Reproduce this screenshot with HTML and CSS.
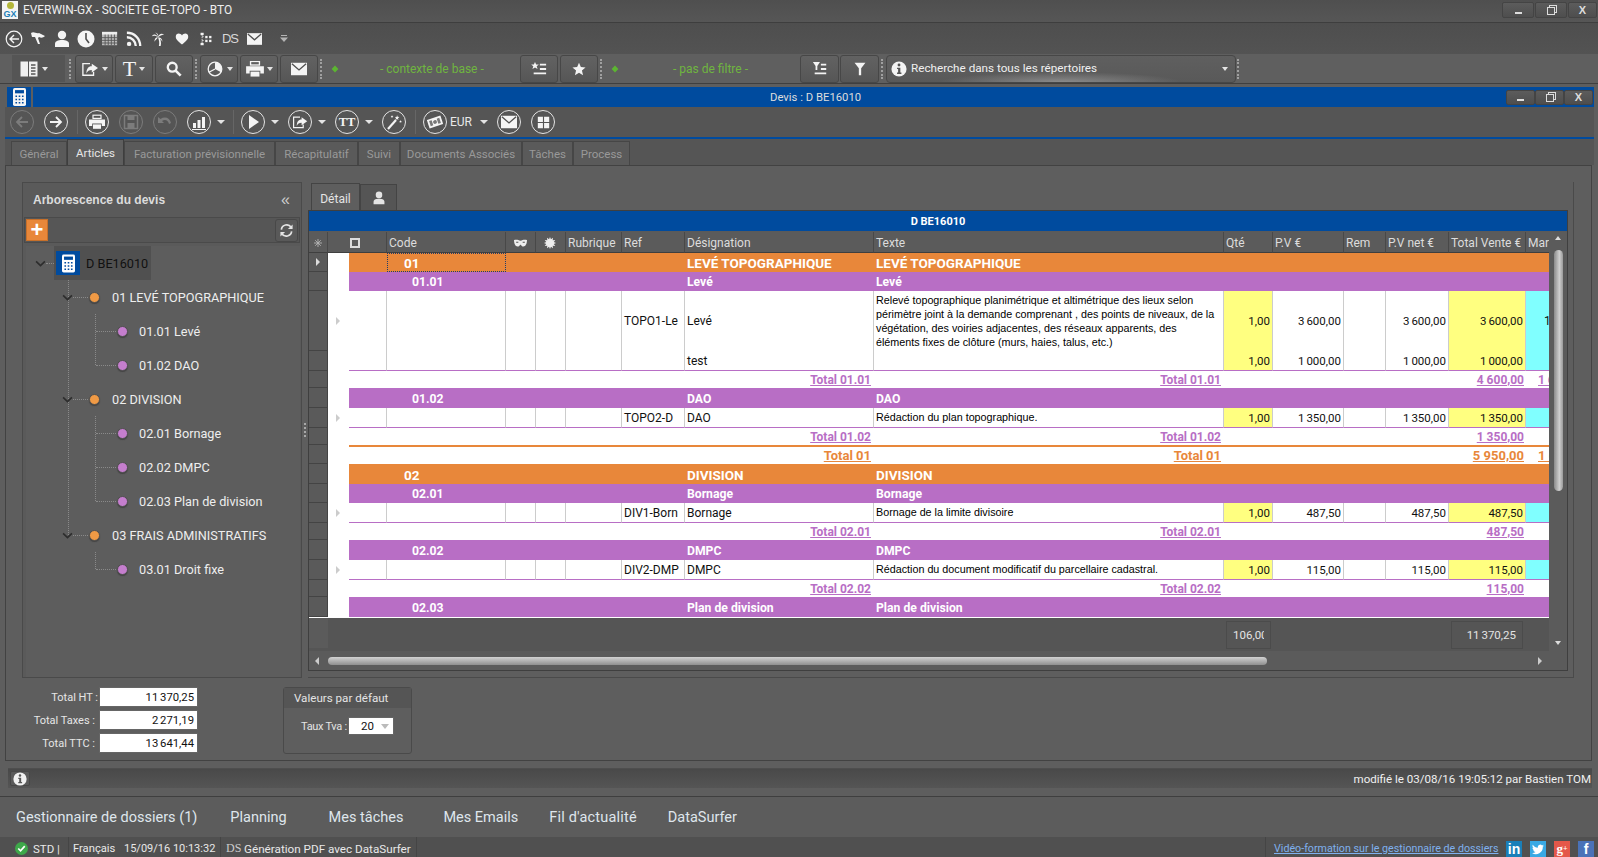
FILE: index.html
```html
<!DOCTYPE html>
<html lang="fr">
<head>
<meta charset="utf-8">
<title>EVERWIN-GX</title>
<link rel="stylesheet" href="styles.css">
</head>
<body>
<svg class="defs" aria-hidden="true">
  <symbol id="i-back" viewBox="0 0 18 18"><circle cx="9" cy="9" r="7.8" fill="none" stroke="currentColor" stroke-width="1.2"/><path d="M14 9H5M9 5L5 9l4 4" fill="none" stroke="currentColor" stroke-width="1.4"/></symbol>
  <symbol id="i-flag" viewBox="0 0 18 18"><path d="M2 3c3-2 5 1 8 0l6 3c-2 2-4 2-6 1l-1 1 2 6-2 0-3-7-3 0z" fill="currentColor"/></symbol>
  <symbol id="i-person" viewBox="0 0 18 18"><circle cx="9" cy="5" r="4.2" fill="currentColor"/><path d="M2 17v-3c0-3 3-4 7-4s7 1 7 4v3z" fill="currentColor"/></symbol>
  <symbol id="i-clock" viewBox="0 0 18 18"><circle cx="9" cy="9" r="8.5" fill="currentColor"/><path d="M9 3v6l3 4" fill="none" stroke="#4d4d4d" stroke-width="1.6"/></symbol>
  <symbol id="i-cal" viewBox="0 0 18 16"><rect width="17" height="15" fill="#bbb"/><rect y="0" width="17" height="3" fill="#eee"/><path d="M0 6.500h17M0 9.500h17M0 12.500h17M3.500 3v12M7 3v12M10.500 3v12M14 3v12" stroke="#555"/></symbol>
  <symbol id="i-rss" viewBox="0 0 18 18"><circle cx="3.500" cy="14.500" r="2.500" fill="currentColor"/><path d="M1 7c5.500 0 10 4.500 10 10M1 2c8.500 0 15 6.500 15 15" fill="none" stroke="currentColor" stroke-width="2.600"/></symbol>
  <symbol id="i-palm" viewBox="0 0 18 18"><path d="M9 7c1 3 2 6 1 10h2c1-4 0-8-2-10zM9 7C7 3 4 3 2 6c2-1 4-1 7 1zM9 7c1-4 4-5 7-3-2 0-4 1-7 3zM9 7C8 9 6 10 5 12c0-3 1-5 4-5zM9 7c3 0 5 2 5 5-1-2-3-4-5-5zM9 7C9 5 8 3 6 2c2 0 4 2 3 5z" fill="currentColor"/></symbol>
  <symbol id="i-heart" viewBox="0 0 18 18"><path d="M9 16C3 11 1 9 1 6c0-5 6-5 8-1.500C11 1 17 1 17 6c0 3-2 5-8 10z" fill="currentColor"/></symbol>
  <symbol id="i-tree" viewBox="0 0 18 18"><path d="M4 3v12M4 6h3M4 11h3" stroke="currentColor" fill="none" stroke-dasharray="2 1"/><rect x="2" y="1" width="4" height="3" fill="currentColor"/><rect x="2" y="14" width="4" height="3" fill="currentColor"/><rect x="8" y="5" width="3" height="3" fill="currentColor"/><rect x="13" y="5" width="3" height="3" fill="currentColor"/><rect x="8" y="10" width="3" height="3" fill="currentColor"/><rect x="13" y="10" width="3" height="3" fill="currentColor"/></symbol>
  <symbol id="i-mail" viewBox="0 0 18 14"><rect width="18" height="14" fill="currentColor"/><path d="M1 1l8 7 8-7" fill="none" stroke="#505050" stroke-width="1.500"/></symbol>
  <symbol id="i-book" viewBox="0 0 18 16"><rect x="0.500" y="0.500" width="7.500" height="15" fill="#f0f0f0"/><rect x="9" y="0.500" width="8.500" height="15" fill="#f0f0f0"/><path d="M11 4h4.500M11 7h4.500M11 10h4.500M11 13h4.500" stroke="#555" stroke-width="1.500"/></symbol>
  <symbol id="i-share" viewBox="0 0 20 18"><path d="M10 3H2v13h12v-4" fill="none" stroke="currentColor" stroke-width="1.500"/><path d="M12 3l7 5-7 5v-3c-3 0-5 1-6 4 0-5 2-8 6-8z" fill="currentColor"/></symbol>
  <symbol id="i-search" viewBox="0 0 18 18"><circle cx="7" cy="7" r="5" fill="none" stroke="currentColor" stroke-width="2.600"/><path d="M10.500 10.500L16.500 16.500" stroke="currentColor" stroke-width="3"/></symbol>
  <symbol id="i-pie" viewBox="0 0 20 20"><circle cx="10" cy="10" r="8.500" fill="none" stroke="currentColor" stroke-width="1.600"/><path d="M10 1.500V10L17.500 14A8.500 8.500 0 0 0 10 1.500z" fill="currentColor"/><path d="M10 10L2.500 14" stroke="currentColor" stroke-width="1.600"/></symbol>
  <symbol id="i-print" viewBox="0 0 20 18"><rect x="5" y="0.500" width="10" height="4" fill="none" stroke="currentColor" stroke-width="1.500"/><path d="M0 6h20v8h-4v-3H4v3H0z" fill="currentColor"/><rect x="5" y="12" width="10" height="5.500" fill="currentColor"/></symbol>
  <symbol id="i-lstar" viewBox="0 0 18 16"><path d="M4.500 0l1.300 3h3l-2.400 2 1 3-2.900-1.800L1.600 8l1-3L.2 3h3z" fill="currentColor"/><path d="M10 3h7M10 8h7M3 13h14" stroke="currentColor" stroke-width="2"/></symbol>
  <symbol id="i-star" viewBox="0 0 18 18"><path d="M9 1l2.400 5.500 6 .5-4.600 4 1.400 6L9 13.800 3.800 17l1.400-6L.6 7l6-.5z" fill="currentColor"/></symbol>
  <symbol id="i-lfilt" viewBox="0 0 18 18"><path d="M1 1h8L6 5.500V10H4V5.500z" fill="currentColor"/><path d="M10 4h6M10 9h6M3 14h13" stroke="currentColor" stroke-width="2"/></symbol>
  <symbol id="i-filter" viewBox="0 0 16 18"><path d="M1 1h14L9.500 8v9h-3V8z" fill="currentColor"/></symbol>
  <symbol id="i-info" viewBox="0 0 18 18"><circle cx="9" cy="9" r="8.500" fill="currentColor"/><circle cx="9" cy="4.500" r="1.600" fill="#555"/><path d="M6.800 7.500H10.500V13h1.200v1.500H6.800V13H8V9H6.800z" fill="#555"/></symbol>
  <symbol id="i-calc" viewBox="0 0 16 22"><rect width="16" height="22" rx="2" fill="currentColor"/><rect x="2.500" y="2.500" width="11" height="4" fill="#004b9e"/><path d="M3 9h2v2H3zM7 9h2v2H7zM11 9h2v2h-2zM3 13h2v2H3zM7 13h2v2H7zM11 13h2v2h-2zM3 17h2v2H3zM7 17h2v2H7zM11 17h2v2h-2z" fill="#004b9e"/></symbol>
  <symbol id="i-al" viewBox="0 0 16 16"><path d="M14 8H3M8 3L3 8l5 5" fill="none" stroke="currentColor" stroke-width="1.800"/></symbol>
  <symbol id="i-ar" viewBox="0 0 16 16"><path d="M2 8h11M8 3l5 5-5 5" fill="none" stroke="currentColor" stroke-width="1.800"/></symbol>
  <symbol id="i-save" viewBox="0 0 16 16"><path d="M1.500 1.500h13v13h-13z" fill="none" stroke="currentColor" stroke-width="1.500"/><rect x="4.500" y="2" width="7" height="4" fill="currentColor"/><rect x="4.500" y="9" width="7" height="5" fill="currentColor"/></symbol>
  <symbol id="i-undo" viewBox="0 0 16 16"><path d="M1 3v6h6L5 7c3-2 6-1 7 3l2-1C13 4 8 2 3.500 5z" fill="currentColor"/></symbol>
  <symbol id="i-chart" viewBox="0 0 16 16"><path d="M1 15h14v1H1z" fill="currentColor"/><path d="M2 9h3v5H2zM6.500 6h3v8h-3zM11 3h3v11h-3z" fill="currentColor"/></symbol>
  <symbol id="i-play" viewBox="0 0 16 16"><path d="M4 1l10 7-10 7z" fill="currentColor"/></symbol>
  <symbol id="i-wand" viewBox="0 0 16 16"><path d="M2 15L10 6" stroke="currentColor" stroke-width="2.200"/><path d="M11 1l.6 1.800 1.800.2-1.400 1.200.4 1.800-1.400-1-1.500 1 .5-1.800L9 3l1.800-.2zM14.500 6l.4 1 1 .1-.8.700.2 1-.8-.5-.8.500.2-1-.7-.7 1-.1zM6 1l.4 1 1 .1-.8.700.2 1L6 3.300l-.8.500.2-1-.7-.7 1-.1z" fill="currentColor"/></symbol>
  <symbol id="i-money" viewBox="0 0 18 14"><g transform="rotate(-18 9 7)"><rect x="1" y="2" width="16" height="10" fill="currentColor"/><path d="M3 4h3v6H3zM12 4h3v6h-3z" fill="#777"/><circle cx="9" cy="7" r="2.200" fill="#777"/></g></symbol>
  <symbol id="i-win" viewBox="0 0 16 16"><path d="M1 1h6.300v6.300H1zM8.700 1H15v6.300H8.700zM1 8.700h6.300V15H1zM8.700 8.700H15V15H8.700z" fill="currentColor"/></symbol>
  <symbol id="i-mask" viewBox="0 0 18 10"><path d="M0 1c4-1 6 0 9 1 3-1 5-2 9-1 0 5-2 9-5 9-2 0-3-2-4-3-1 1-2 3-4 3C2 10 0 6 0 1z" fill="currentColor"/><path d="M3 4h3M12 4h3" stroke="#555" stroke-width="1.400"/></symbol>
  <symbol id="i-burst" viewBox="0 0 16 16"><path d="M8 0l1.300 3L12 1l-.4 3.300L15 4l-2 2.600L16 8l-3 1.400L15 12l-3.400-.3L12 15 9.300 13 8 16l-1.300-3L4 15l.4-3.300L1 12l2-2.600L0 8l3-1.400L1 4l3.400.3L4 1l2.700 2z" fill="currentColor"/></symbol>
  <symbol id="i-snow" viewBox="0 0 10 10"><path d="M5 0v10M0 5h10M1.500 1.500l7 7M8.500 1.500l-7 7" stroke="currentColor" stroke-width="1.100"/></symbol>
  <symbol id="i-chev" viewBox="0 0 10 6"><path d="M1 1l4 4 4-4" fill="none" stroke="currentColor" stroke-width="1.500"/></symbol>
  <symbol id="i-refresh" viewBox="0 0 16 16"><path d="M2.500 7A5.800 5.800 0 0 1 13 4.500M13.500 9A5.800 5.800 0 0 1 3 11.500" fill="none" stroke="currentColor" stroke-width="1.800"/><path d="M14.500 1.500V6.500H9.500zM1.500 14.500V9.500H6.500z" fill="currentColor"/></symbol>
  <symbol id="i-ok" viewBox="0 0 14 14"><circle cx="7" cy="7" r="7" fill="#3ea84a"/><path d="M3.500 7l2.500 2.500 4.500-5" fill="none" stroke="#fff" stroke-width="1.800"/></symbol>
  <symbol id="i-drop" viewBox="0 0 8 7"><path d="M1 .5h6" stroke="currentColor"/><path d="M0 2.500h8L4 7z" fill="currentColor"/></symbol>
</svg>

<div class="app">
  <header class="titlebar">
    <div class="logo"><span class="logo-dot"></span><span class="logo-gx">GX</span></div>
    <span class="apptitle">EVERWIN-GX - SOCIETE GE-TOPO - BTO</span>
    <div class="winbtns">
      <button class="wb"><span class="wmin"></span></button>
      <button class="wb"><span class="wmax"></span></button>
      <button class="wb wx">X</button>
    </div>
  </header>

  <nav class="quick">
    <span class="qi"><svg class="q18"><use href="#i-back"/></svg></span>
    <span class="qi"><svg class="q18"><use href="#i-flag"/></svg></span>
    <span class="qi"><svg class="q18"><use href="#i-person"/></svg></span>
    <span class="qi"><svg class="q18"><use href="#i-clock"/></svg></span>
    <span class="qi"><svg class="q16"><use href="#i-cal"/></svg></span>
    <span class="qi"><svg class="q16"><use href="#i-rss"/></svg></span>
    <span class="qi"><svg class="q16"><use href="#i-palm"/></svg></span>
    <span class="qi"><svg class="q14"><use href="#i-heart"/></svg></span>
    <span class="qi"><svg class="q14"><use href="#i-tree"/></svg></span>
    <span class="qi ds">DS</span>
    <span class="qi"><svg class="q15"><use href="#i-mail"/></svg></span>
    <svg class="qdrop"><use href="#i-drop"/></svg>
  </nav>

  <nav class="toolbar">
    <div class="sidebtn"><svg class="t18"><use href="#i-book"/></svg><span class="arr"></span></div>
    <span class="grip g1"></span>
    <button class="tb"><svg class="t18"><use href="#i-share"/></svg><span class="arr"></span></button>
    <button class="tb"><span class="bigt">T</span><span class="arr"></span></button>
    <button class="tb"><svg class="t16"><use href="#i-search"/></svg></button>
    <span class="grip g2"></span>
    <button class="tb"><svg class="t18"><use href="#i-pie"/></svg><span class="arr"></span></button>
    <button class="tb"><svg class="t18"><use href="#i-print"/></svg><span class="arr"></span></button>
    <button class="tb"><svg class="t16"><use href="#i-mail"/></svg></button>
    <span class="grip"></span>
    <div class="ctx"><span class="gdot"></span><span class="ctxt c1">- contexte de base -</span></div>
    <button class="tb"><svg class="t16"><use href="#i-lstar"/></svg></button>
    <button class="tb"><svg class="t14"><use href="#i-star"/></svg></button>
    <span class="grip"></span>
    <div class="ctx"><span class="gdot"></span><span class="ctxt c2">- pas de filtre -</span></div>
    <button class="tb tbw"><svg class="t16"><use href="#i-lfilt"/></svg></button>
    <button class="tb tbw0"><svg class="t14"><use href="#i-filter"/></svg></button>
    <span class="grip g4"></span>
    <div class="searchbox"><svg class="t16"><use href="#i-info"/></svg><span class="stext">Recherche dans tous les répertoires</span><span class="arr arrs"></span></div>
    <span class="grip g5"></span>
  </nav>

  <section class="mdi">
    <div class="mdihead">
      <div class="mdiicon"><svg class="calc"><use href="#i-calc"/></svg></div>
      <div class="mdititle"><span class="mdilabel">Devis : D BE16010</span>
        <div class="winbtns mdib">
          <button class="wb"><span class="wmin"></span></button>
          <button class="wb"><span class="wmax"></span></button>
          <button class="wb wx">X</button>
        </div>
      </div>
    </div>

    <div class="tb2">
      <span class="c off"><svg class="ci"><use href="#i-al"/></svg></span>
      <span class="c m10"><svg class="ci"><use href="#i-ar"/></svg></span>
      <span class="sep s9"></span>
      <span class="c m7"><svg class="ci"><use href="#i-print"/></svg></span>
      <span class="c off m10"><svg class="ci"><use href="#i-save"/></svg></span>
      <span class="c off m10"><svg class="ci"><use href="#i-undo"/></svg></span>
      <span class="c m10"><svg class="ci"><use href="#i-chart"/></svg></span>
      <span class="arr a8 a6"></span>
      <span class="sep s8"></span>
      <span class="c m7"><svg class="ci"><use href="#i-play"/></svg></span>
      <span class="arr a8 a6"></span>
      <span class="c m9"><svg class="ci"><use href="#i-share"/></svg></span>
      <span class="arr a8 a6"></span>
      <span class="c m9 tt">TT</span>
      <span class="arr a8 a6"></span>
      <span class="c m9"><svg class="ci"><use href="#i-wand"/></svg></span>
      <span class="sep s9"></span>
      <span class="c m7"><svg class="ci"><use href="#i-money"/></svg></span>
      <span class="eur">EUR</span>
      <span class="arr a8 a9"></span>
      <span class="c m9"><svg class="ci"><use href="#i-mail"/></svg></span>
      <span class="c m10"><svg class="ci ci14"><use href="#i-win"/></svg></span>
    </div>
    <div class="blueline"></div>

    <div class="tabs">
      <span class="tab w56">Général</span>
      <span class="tab active w57">Articles</span>
      <span class="tab w151">Facturation prévisionnelle</span>
      <span class="tab w83">Récapitulatif</span>
      <span class="tab w42">Suivi</span>
      <span class="tab w122">Documents Associés</span>
      <span class="tab w51">Tâches</span>
      <span class="tab w57">Process</span>
    </div>

    <div class="content">
      <div class="main">
        <aside class="left">
          <div class="lhead"><span class="ltitle">Arborescence du devis</span><span class="collapse">«</span></div>
          <div class="ltools">
            <button class="plus">+</button>
            <button class="refresh"><svg class="r16"><use href="#i-refresh"/></svg></button>
          </div>
          <div class="tree">
            <div class="node l0"><svg class="chev"><use href="#i-chev"/></svg><span class="dash d0"></span>
              <span class="sel"><span class="calcbox"><svg class="calc2"><use href="#i-calc"/></svg></span><span class="seltext">D BE16010</span></span></div>
            <div class="vline">
              <div class="grp">
                <div class="node l1"><svg class="chev"><use href="#i-chev"/></svg><span class="dash d1"></span><span class="dot or"></span><span class="nt">01 LEVÉ TOPOGRAPHIQUE</span></div>
                <div class="node l2"><span class="dash d2"></span><span class="dot pu"></span><span class="nt">01.01 Levé</span></div>
                <div class="node l2"><span class="dash d2"></span><span class="dot pu"></span><span class="nt">01.02 DAO</span></div>
              </div>
              <div class="grp">
                <div class="node l1"><svg class="chev"><use href="#i-chev"/></svg><span class="dash d1"></span><span class="dot or"></span><span class="nt">02 DIVISION</span></div>
                <div class="node l2"><span class="dash d2"></span><span class="dot pu"></span><span class="nt">02.01 Bornage</span></div>
                <div class="node l2"><span class="dash d2"></span><span class="dot pu"></span><span class="nt">02.02 DMPC</span></div>
                <div class="node l2"><span class="dash d2"></span><span class="dot pu"></span><span class="nt">02.03 Plan de division</span></div>
              </div>
              <div class="grp">
                <div class="node l1"><svg class="chev"><use href="#i-chev"/></svg><span class="dash d1"></span><span class="dot or"></span><span class="nt">03 FRAIS ADMINISTRATIFS</span></div>
                <div class="node l2"><span class="dash d2"></span><span class="dot pu"></span><span class="nt">03.01 Droit fixe</span></div>
              </div>
            </div>
          </div>
        </aside>
        <div class="splitter"><span class="splitgrip"></span></div>
        <div class="right">
          <div class="dtabs">
            <span class="dtab dactive">Détail</span>
            <span class="dtab duser"><svg class="t14"><use href="#i-person"/></svg></span>
          </div>
          <div class="detail">
            <div class="dblue">D BE16010</div>
            <div class="gridrow">
              <div class="gridcol">
                <div class="tablewrap">
                  <table class="grid">
                    <colgroup>
                      <col class="k19"><col class="k21"><col class="k38"><col class="k119"><col class="k30"><col class="k30"><col class="k56"><col class="k63"><col class="k189"><col class="k350"><col class="k49"><col class="k71"><col class="k42"><col class="k63"><col class="k77"><col class="k23">
                    </colgroup>
                    <thead>
                      <tr class="hd">
                        <th class="rh hc"><svg class="burst"><use href="#i-snow"/></svg></th>
                        <th colspan="2" class="hchk"><span class="chkbox"></span></th>
                        <th>Code</th>
                        <th class="hc"><svg class="mask"><use href="#i-mask"/></svg></th>
                        <th class="hc"><svg class="burst2"><use href="#i-burst"/></svg></th>
                        <th>Rubrique</th><th>Ref</th><th>Désignation</th><th>Texte</th><th>Qté</th><th>P.V €</th><th>Rem</th><th>P.V net €</th><th>Total Vente €</th><th class="lastth">Mar</th>
                      </tr>
                    </thead>
                    <tbody>
                      <tr class="ro h19">
                        <th class="rh"><span class="tri trw"></span></th><td class="ind"></td><td></td><td class="code0 focus">01</td><td colspan="4"></td><td>LEVÉ TOPOGRAPHIQUE</td><td>LEVÉ TOPOGRAPHIQUE</td><td colspan="6"></td>
                      </tr>
                      <tr class="rp h19">
                        <th class="rh"></th><td class="ind"></td><td></td><td class="code1">01.01</td><td colspan="4"></td><td>Levé</td><td>Levé</td><td colspan="6"></td>
                      </tr>
                      <tr class="ra h60">
                        <th class="rh"></th><td class="ind"><span class="tri trg"></span></td><td class="b"></td><td class="b"></td><td class="b"></td><td class="b"></td><td class="b"></td><td class="b">TOPO1-Le</td><td class="b">Levé</td>
                        <td class="b txt top">Relevé topographique planimétrique et altimétrique des lieux selon périmètre joint à la demande comprenant , des points de niveaux, de la végétation, des voiries adjacentes, des réseaux apparents, des<br>éléments fixes de clôture (murs, haies, talus, etc.)</td>
                        <td class="b y n">1,00</td><td class="b n">3 600,00</td><td class="b"></td><td class="b n">3 600,00</td><td class="b y n">3 600,00</td><td class="cy clip"><span class="marv">1 000,00</span></td>
                      </tr>
                      <tr class="ra h20 line">
                        <th class="rh"></th><td class="ind"></td><td class="b"></td><td class="b"></td><td class="b"></td><td class="b"></td><td class="b"></td><td class="b"></td><td class="b">test</td><td class="b"></td>
                        <td class="b y n">1,00</td><td class="b n">1 000,00</td><td class="b"></td><td class="b n">1 000,00</td><td class="b y n">1 000,00</td><td class="cy"></td>
                      </tr>
                      <tr class="rt h17">
                        <th class="rh"></th><td class="ind"></td><td colspan="6"></td><td class="tr"><u>Total 01.01</u></td><td class="tr"><u>Total 01.01</u></td><td colspan="4"></td><td class="n"><u>4 600,00</u></td><td class="clip"><u class="mart">1 600,00</u></td>
                      </tr>
                      <tr class="rp h20">
                        <th class="rh"></th><td class="ind"></td><td></td><td class="code1">01.02</td><td colspan="4"></td><td>DAO</td><td>DAO</td><td colspan="6"></td>
                      </tr>
                      <tr class="ra h20 line">
                        <th class="rh"></th><td class="ind"><span class="tri trg"></span></td><td class="b"></td><td class="b"></td><td class="b"></td><td class="b"></td><td class="b"></td><td class="b">TOPO2-D</td><td class="b">DAO</td><td class="b txt">Rédaction du plan topographique.</td>
                        <td class="b y n">1,00</td><td class="b n">1 350,00</td><td class="b"></td><td class="b n">1 350,00</td><td class="b y n">1 350,00</td><td class="cy"></td>
                      </tr>
                      <tr class="rt h17">
                        <th class="rh"></th><td class="ind"></td><td colspan="6"></td><td class="tr"><u>Total 01.02</u></td><td class="tr"><u>Total 01.02</u></td><td colspan="4"></td><td class="n"><u>1 350,00</u></td><td></td>
                      </tr>
                      <tr class="rto h19">
                        <th class="rh"></th><td class="ind"></td><td colspan="6" class="ol"></td><td class="tr ol"><u>Total 01</u></td><td class="tr ol"><u>Total 01</u></td><td colspan="4" class="ol"></td><td class="n ol"><u>5 950,00</u></td><td class="clip ol"><u class="mart">1 600,00</u></td>
                      </tr>
                      <tr class="ro h20">
                        <th class="rh"></th><td class="ind"></td><td></td><td class="code0">02</td><td colspan="4"></td><td>DIVISION</td><td>DIVISION</td><td colspan="6"></td>
                      </tr>
                      <tr class="rp h19">
                        <th class="rh"></th><td class="ind"></td><td></td><td class="code1">02.01</td><td colspan="4"></td><td>Bornage</td><td>Bornage</td><td colspan="6"></td>
                      </tr>
                      <tr class="ra h20 line">
                        <th class="rh"></th><td class="ind"><span class="tri trg"></span></td><td class="b"></td><td class="b"></td><td class="b"></td><td class="b"></td><td class="b"></td><td class="b">DIV1-Born</td><td class="b">Bornage</td><td class="b txt">Bornage de la limite divisoire</td>
                        <td class="b y n">1,00</td><td class="b n">487,50</td><td class="b"></td><td class="b n">487,50</td><td class="b y n">487,50</td><td class="cy"></td>
                      </tr>
                      <tr class="rt h17">
                        <th class="rh"></th><td class="ind"></td><td colspan="6"></td><td class="tr"><u>Total 02.01</u></td><td class="tr"><u>Total 02.01</u></td><td colspan="4"></td><td class="n"><u>487,50</u></td><td></td>
                      </tr>
                      <tr class="rp h20">
                        <th class="rh"></th><td class="ind"></td><td></td><td class="code1">02.02</td><td colspan="4"></td><td>DMPC</td><td>DMPC</td><td colspan="6"></td>
                      </tr>
                      <tr class="ra h20 line">
                        <th class="rh"></th><td class="ind"><span class="tri trg"></span></td><td class="b"></td><td class="b"></td><td class="b"></td><td class="b"></td><td class="b"></td><td class="b">DIV2-DMP</td><td class="b">DMPC</td><td class="b txt">Rédaction du document modificatif du parcellaire cadastral.</td>
                        <td class="b y n">1,00</td><td class="b n">115,00</td><td class="b"></td><td class="b n">115,00</td><td class="b y n">115,00</td><td class="cy"></td>
                      </tr>
                      <tr class="rt h17">
                        <th class="rh"></th><td class="ind"></td><td colspan="6"></td><td class="tr"><u>Total 02.02</u></td><td class="tr"><u>Total 02.02</u></td><td colspan="4"></td><td class="n"><u>115,00</u></td><td></td>
                      </tr>
                      <tr class="rp h20">
                        <th class="rh"></th><td class="ind"></td><td></td><td class="code1">02.03</td><td colspan="4"></td><td>Plan de division</td><td>Plan de division</td><td colspan="6"></td>
                      </tr>
                    </tbody>
                  </table>
                </div>
                <div class="gridfoot">
                  <span class="footrh"></span>
                  <span class="sum s1"><span class="sumclip">106,00</span></span>
                  <span class="sum s2">11 370,25</span>
                </div>
              </div>
              <div class="vscroll"><span class="up"></span><span class="vthumb"></span><span class="down"></span></div>
            </div>
            <div class="hscroll"><span class="hl"></span><span class="hthumb"></span><span class="hr"></span></div>
          </div>
        </div>
      </div>
      <div class="summary">
        <div class="totals">
          <span class="tl">Total HT :</span><span class="tv">11 370,25</span>
          <span class="tl tl2">Total Taxes :</span><span class="tv">2 271,19</span>
          <span class="tl tl2">Total TTC :</span><span class="tv">13 641,44</span>
        </div>
        <div class="group">
          <div class="grouph">Valeurs par défaut</div>
          <div class="groupb"><span class="tvaL">Taux Tva :</span><span class="combo"><span>20</span><span class="comboarr"></span></span></div>
        </div>
      </div>
    </div>

    <div class="infobar">
      <button class="infobtn"><svg class="t14"><use href="#i-info"/></svg></button>
      <span class="mod">modifié le 03/08/16 19:05:12 par Bastien TOM</span>
    </div>
  </section>

  <nav class="bottomtabs">
    <span class="bt">Gestionnaire de dossiers (1)</span>
    <span class="bt">Planning</span>
    <span class="bt bm9">Mes tâches</span>
    <span class="bt bm7">Mes Emails</span>
    <span class="bt bfil">Fil d'actualité</span>
    <span class="bt bds">DataSurfer</span>
  </nav>

  <footer class="status">
    <svg class="ok"><use href="#i-ok"/></svg>
    <span class="st std">STD |</span>
    <span class="ssep s1s"></span>
    <span class="st fr">Français</span>
    <span class="st dt">15/09/16 10:13:32</span>
    <span class="ssep s2s"></span>
    <span class="st dsm">DS</span>
    <span class="st gen">Génération PDF avec DataSurfer</span>
    <span class="ssep s3s"></span>
    <span class="ssep s4s"></span>
    <a class="vid" href="#">Vidéo-formation sur le gestionnaire de dossiers</a>
    <span class="soc in">in</span>
    <span class="soc tw"><svg class="twb" viewBox="0 0 16 14"><path d="M16 2c-.6.300-1.200.400-1.900.500.700-.400 1.200-1 1.400-1.800-.6.400-1.300.600-2.100.800A3.300 3.300 0 0 0 7.800 4.500C5.100 4.400 2.700 3.100 1.100.600c-.9 1.500-.4 3.400 1 4.400-.5 0-1-.2-1.500-.4 0 1.600 1.100 3 2.600 3.300-.5.100-1 .100-1.500 0 .4 1.300 1.600 2.300 3.100 2.300A6.600 6.600 0 0 1 0 11.600 9.300 9.300 0 0 0 14.400 3.300c.6-.4 1.200-.8 1.600-1.300z" fill="#fff"/></svg></span>
    <span class="soc gp">g<sup>+</sup></span>
    <span class="soc fb">f</span>
  </footer>
</div>
</body>
</html>
```
FILE: styles.css
```css
* { box-sizing: border-box; }
html, body { margin: 0; padding: 0; height: 100%; overflow: hidden; background: #5e5e5e; }
body { font-family: Roboto, "Open Sans", sans-serif; font-size: 12px; color: #e6e6e6; }
button { font-family: inherit; color: inherit; padding: 0; background: none; border: 0; }
svg { display: block; flex: none; }
.defs { width: 0; height: 0; position: absolute; }
.app { width: 1598px; height: 857px; display: flex; flex-direction: column; overflow: hidden; }

/* title */
.titlebar { height: 23px; display: flex; align-items: center; background: linear-gradient(#4f4f4f, #565656); border-bottom: 1px solid #3e3e3e; padding: 0 0 2px 2px; }
.logo { width: 16px; height: 18px; background: #f4f4f4; display: flex; flex-direction: column; align-items: center; justify-content: flex-end; position: relative; }
.logo-dot { position: absolute; top: 1px; left: 5px; width: 7px; height: 7px; border-radius: 50%; background: #b3b63a; }
.logo-gx { font: bold 9px/9px "Liberation Sans", sans-serif; color: #1d7fb8; }
.apptitle { margin-left: 5px; font-size: 11.900px; color: #eee; width: 300px; white-space: nowrap; }
.winbtns { margin-left: auto; display: flex; gap: 1px; padding-right: 1px; }
.wb { width: 32px; height: 16px; background: linear-gradient(#5c5c5c, #4e4e4e); border: 1px solid #444; border-radius: 2px; display: flex; align-items: center; justify-content: center; color: #ddd; font: bold 11px/12px "Liberation Sans", sans-serif; }
.wmin { width: 7px; height: 2px; background: #ddd; margin-top: 6px; }
.wmax { width: 8px; height: 8px; border: 1px solid #ddd; box-shadow: 2px -2px 0 -1px #555, 2px -2px 0 0 #ddd; background: #555; margin-top: 2px; }
.wb.wx { width: 29px; }

/* quick */
.quick { height: 31px; display: flex; align-items: center; padding-left: 2px; background: linear-gradient(#4e4e4e, #535353); color: #f4f4f4; }
.qi { width: 24px; display: flex; justify-content: center; align-items: center; }
.q18 { width: 18px; height: 18px; }
.q16 { width: 16px; height: 16px; }
.q15 { width: 15px; height: 12px; }
.q14 { width: 14px; height: 14px; }
.ds { font: 13px "Liberation Sans", sans-serif; color: #d8d8d8; letter-spacing: -1px; }
.qdrop { margin-left: 14px; width: 8px; height: 7px; color: #b4b4b4; }

/* toolbar */
.toolbar { height: 30px; display: flex; align-items: center; padding-left: 12px; background: #5f5f5f; border-bottom: 1px solid #3f3f3f; color: #f4f4f4; }
.sidebtn { width: 53px; height: 27px; background: #555; display: flex; align-items: center; padding-left: 8px; gap: 4px; }
.grip { width: 3px; height: 20px; border-left: 2px dotted #a0a0a0; flex: none; }
.g1 { margin: 0 3px 0 4px; }
.g2 { margin: 0 2px 0 0; }
.g4 { margin: 0 2px 0 2px; }
.g5 { margin-left: 1px; }
.tb { width: 38px; height: 28px; margin-right: 2px; background: linear-gradient(#626262, #565656); border: 1px solid #474747; border-radius: 3px; display: flex; align-items: center; justify-content: center; gap: 3px; color: #f4f4f4; flex: none; }
.tb.tbw { width: 39px; margin-right: 1px; }
.tb.tbw0 { width: 39px; margin-right: 0; }
.t18 { width: 18px; height: 16px; }
.t16 { width: 16px; height: 16px; }
.t14 { width: 14px; height: 14px; }
.bigt { font: 22px/22px "Liberation Serif", serif; }
.arr { width: 0; height: 0; border: 3.500px solid transparent; border-top: 4px solid #e4e4e4; border-bottom: 0; flex: none; }
.a8 { border-width: 4px 4px 0; }
.ctx { display: flex; align-items: center; height: 28px; flex: none; width: 197px; }
.gdot { width: 6px; height: 6px; margin-left: 9px; transform: rotate(45deg) scale(.8); background: #5cb531; }
.ctxt { color: #6fb53f; font-size: 12px; white-space: nowrap; }
.c1 { margin-left: 42px; }
.c2 { margin-left: 55px; }
.searchbox { width: 350px; height: 28px; display: flex; align-items: center; padding-left: 4px; border: 1px solid #474747; border-radius: 4px; background: radial-gradient(ellipse 120px 10px at 50% 100%, #8a8a8a, transparent), linear-gradient(#5f5f5f, #595959); }
.stext { margin: 0 0 2px 4px; font-size: 11.700px; color: #f0f0f0; white-space: nowrap; }
.arrs { margin-left: auto; margin-right: 7px; }

/* mdi */
.mdi { margin: 3px 0 0 5px; width: 1589px; height: 709px; display: flex; flex-direction: column; }
.mdihead { height: 20px; display: flex; }
.calc { width: 13px; height: 20px; color: #f4f4f4; }
.mdiicon { background: #004b9e; margin: 0 0 0 2px; width: 24px; padding: 0; display: flex; justify-content: center; }
.mdititle { margin-left: 2px; flex: 1; background: #004b9e; display: flex; align-items: center; padding-left: 737px; color: #ddd; }
.mdilabel { font-size: 11.300px; }
.mdib { padding-right: 1px; gap: 0; }
.mdib .wb { width: 29px; height: 15px; }
.mdib .wb.wx { width: 29px; }
.tb2 { height: 30px; display: flex; align-items: center; padding-left: 5px; background: #555; }
.c { width: 24px; height: 24px; border-radius: 50%; border: 1.200px solid #e4e4e4; display: flex; align-items: center; justify-content: center; color: #f4f4f4; flex: none; }
.c.off { border-color: #7c7c7c; color: #7c7c7c; }
.ci { width: 16px; height: 16px; }
.ci14 { width: 13px; height: 13px; }
.tt { font: bold 12.500px "Liberation Serif", serif; }
.m7 { margin-left: 7px; }
.m9 { margin-left: 9px; }
.m10 { margin-left: 10px; }
.sep { width: 1px; height: 24px; background: #666; }
.s8 { margin-left: 8px; }
.s9 { margin-left: 9px; }
.a6 { margin-left: 6px; }
.a9 { margin-left: 9px; }
.eur { margin-left: 3px; width: 21px; font-size: 12px; color: #e8e8e8; }
.blueline { height: 2px; background: #004b9e; }
.tabs { height: 26px; display: flex; padding: 2px 0 0 6px; background: #555; }
.tab { height: 24px; display: flex; align-items: center; justify-content: center; border: 1px solid #464646; border-bottom: 0; background: #5a5a5a; color: #999; font-size: 11.500px; padding-top: 1px; white-space: nowrap; flex: none; }
.tab.active { height: 26px; margin-top: -2px; color: #e6e6e6; background: #5e5e5e; border-color: #3e3e3e; position: relative; padding-top: 1px; }
.w42 { width: 42px; } .w51 { width: 51px; } .w56 { width: 56px; } .w57 { width: 57px; } .w83 { width: 83px; } .w122 { width: 122px; } .w151 { width: 151px; }

.content { height: 596px; width: 1587px; border: 1px solid #424242; padding: 16px 0 0 16px; background: #5e5e5e; }
.main { display: flex; height: 496px; }
.left { width: 280px; border: 1px solid #4a4a4a; background: #5a5a5a; flex: none; }
.lhead { height: 34px; display: flex; align-items: center; padding: 0 11px 0 10px; justify-content: space-between; }
.ltitle { font: bold 12px "Liberation Sans", sans-serif; color: #dcdcdc; }
.collapse { font: 16px/16px "Liberation Sans", sans-serif; color: #ccc; }
.ltools { height: 26px; margin: 0 1px; border: 1px solid #4a4a4a; background: #565656; display: flex; align-items: center; justify-content: space-between; padding: 0 1px; }
.plus { width: 22px; height: 22px; background: #e8873a; color: #fff; font: bold 22px/20px "Liberation Sans", sans-serif; border: 1px solid #c7702a; }
.refresh { width: 23px; height: 23px; border: 1px solid #484848; border-radius: 3px; background: #595959; display: flex; align-items: center; justify-content: center; color: #e4e4e4; }
.r16 { width: 15px; height: 15px; }
.tree { margin: 3px 1px 0 3px; height: 431px; background: #5d5d5d; font-size: 12.700px; color: #eee; }
.node { height: 34px; display: flex; align-items: center; position: relative; }
.l0 { padding-left: 9px; }
.l1 { padding-left: 36px; }
.l2 { padding-left: 70px; }
.chev { width: 11px; height: 7px; color: #2d2d2d; flex: none; }
.dash { height: 0; border-top: 1px dotted #8a8a8a; flex: none; }
.d0 { width: 8px; }
.d1 { width: 15px; }
.d2 { width: 20px; }
.vline, .grp { position: relative; }
.vline::before { content: ""; position: absolute; left: 42px; top: 0; bottom: 51px; border-left: 1px dotted #8a8a8a; }
.grp::before { content: ""; position: absolute; left: 69px; top: 34px; bottom: 17px; border-left: 1px dotted #8a8a8a; }
.sel { height: 34px; width: 97px; background: #505050; display: flex; align-items: center; padding-left: 2px; flex: none; }
.calcbox { width: 24px; height: 24px; background: #004b9e; display: flex; align-items: center; justify-content: center; flex: none; }
.calc2 { width: 13px; height: 19px; color: #fff; }
.seltext { margin-left: 6px; color: #111; white-space: nowrap; }
.dot { width: 11px; height: 11px; border-radius: 50%; flex: none; border: 1px solid #4f4f4f; box-shadow: 0 1px 1px #444; margin-left: 1px; }
.or { background: #f09a45; }
.pu { background: #c57ece; }
.nt { margin-left: 11px; white-space: nowrap; }
.l1 .nt { margin-left: 12px; }
.splitter { width: 6px; display: flex; align-items: center; justify-content: center; flex: none; }
.splitgrip { width: 2px; height: 14px; border-left: 2px dotted #a8a8a8; }
.right { width: 1266px; flex: none; border-right: 1px solid #4a4a4a; border-bottom: 1px solid #4a4a4a; }
.dtabs { display: flex; height: 28px; padding: 1px 0 0 3px; }
.dtab { height: 27px; border: 1px solid #444; border-bottom: 0; display: flex; align-items: center; justify-content: center; color: #e4e4e4; font-size: 12px; padding-top: 3px; }
.dactive { width: 49px; background: #5e5e5e; }
.duser { width: 37px; background: #555; margin-top: 1px; height: 26px; padding-top: 0; }
.detail { width: 1260px; height: 461px; border: 1px solid #3f3f3f; display: flex; flex-direction: column; background: #5a5a5a; }
.dblue { height: 20px; margin-bottom: 1px; flex: none; background: #004b9e; color: #fff; font: bold 11px/20px Roboto, sans-serif; text-align: center; padding-top: 1px; }
.gridrow { display: flex; height: 419px; flex: none; }
.gridcol { width: 1240px; flex: none; }
.tablewrap { height: 386px; overflow: hidden; background: #fff; }
.grid { table-layout: fixed; border-collapse: separate; border-spacing: 0; width: 1240px; font-size: 12px; color: #111; }
.k19 { width: 19px; } .k21 { width: 21px; } .k38 { width: 38px; } .k119 { width: 119px; } .k30 { width: 30px; } .k56 { width: 56px; } .k63 { width: 63px; } .k189 { width: 189px; } .k350 { width: 350px; } .k49 { width: 49px; } .k71 { width: 71px; } .k42 { width: 42px; } .k77 { width: 77px; } .k23 { width: 23px; }
.grid td, .grid th { padding: 0 3px 0 2px; overflow: hidden; white-space: nowrap; line-height: 14px; }
.grid .hd th { height: 21px; background: #5b5b5b; color: #ddd; font-weight: 400; text-align: left; border-right: 1px solid #484848; border-bottom: 1px solid #3f3f3f; font-size: 12px; padding-top: 2px; }
.grid .hd .lastth { border-right: 0; }
.chkbox { display: block; width: 10px; height: 10px; border: 2px solid #ddd; margin-left: 20px; }
.hc svg { margin: 0 auto; }
.burst { width: 8px; height: 8px; color: #b4b4b4; }
.burst2 { width: 12px; height: 12px; color: #eee; }
.mask { width: 13px; height: 8px; color: #eee; }
.grid .rh { background: #5a5a5a; border-right: 1px solid #444; border-bottom: 1px solid #444; padding: 0; }
.grid .ind { background: #fff; padding: 0; }
.tri { display: block; width: 0; height: 0; border: 4px solid transparent; border-left: 4px solid; border-right: 0; }
.trw { color: #ddd; margin-left: 7px; }
.trg { color: #ccc; margin-left: 8px; }
.ro td:not(.ind) { background: #e8873a; color: #fff; font-weight: 700; font-size: 13.500px; padding-top: 2px; }
.ro.h19 td:not(.ind) { padding-top: 0; }
.rp td:not(.ind) { background: #b86ec5; color: #fff; font-weight: 700; font-size: 12.200px; }
.rp.h20 td:not(.ind) { padding-top: 2px; }
.grid .code0 { padding-left: 17px; }
.grid .code1 { padding-left: 25px; }
.focus { outline: 1px dotted #1f3c6b; outline-offset: -1px; }
.h17 td, .h17 th { height: 17px; }
.h19 td, .h19 th { height: 19px; }
.h20 td, .h20 th { height: 20px; }
.h60 td, .h60 th { height: 60px; }
.ra td:not(.ind) { background: #fff; }
.grid .b { border-right: 1px solid #ccc; }
.ra .y:not(.ind) { background: #ffff80; }
.ra .cy:not(.ind) { background: #80ffff; }
.grid .ra .n { text-align: right; padding-right: 2px; font-size: 11.500px; word-spacing: -1px; }
.line td:not(.ind) { border-bottom: 1px solid #b86ec5; vertical-align: middle; }
.grid .txt { font: 10.750px/14px "Liberation Sans", sans-serif; white-space: normal; color: #000; padding-bottom: 2px; }
.grid .top { vertical-align: top; padding-top: 2px; padding-bottom: 0; }
.marv { display: block; padding-left: 18px; }
.grid .clip { padding: 0; }
.rt td, .rto td { background: #fff; text-align: right; color: #b86ec5; font-weight: 700; }
.rto td { color: #e8873a; font-size: 13px; }
.grid .ol { border-top: 2px solid #e8873a; height: 19px; }
.grid .tr { padding-right: 3px; }
.grid .n { padding-right: 2px; }
.mart { display: block; text-align: left; padding-left: 12px; }
.gridfoot { height: 33px; background: #555; display: flex; align-items: flex-start; padding-top: 3px; }
.footrh { width: 19px; height: 30px; margin-top: -3px; background: #5b5b5b; flex: none; }
.sum { height: 28px; border: 1px solid #4b4b4b; display: flex; align-items: center; color: #e4e4e4; font-size: 11.500px; flex: none; overflow: hidden; }
.s1 { width: 45px; margin-left: 898px; padding-left: 6px; }
.sumclip { white-space: nowrap; width: 31px; overflow: hidden; flex: none; }
.s2 { width: 72px; margin-left: 180px; justify-content: flex-end; padding-right: 6px; word-spacing: -1px; }
.vscroll { width: 18px; background: #5b5b5b; display: flex; flex-direction: column; align-items: center; }
.up { margin-top: 4px; width: 0; height: 0; border: 3.500px solid transparent; border-bottom: 4px solid #ddd; border-top: 0; }
.vthumb { margin-top: 10px; width: 9px; height: 241px; border-radius: 5px; background: linear-gradient(90deg, #8a8a8a, #cfcfcf 60%, #9a9a9a); }
.down { margin-top: 150px; width: 0; height: 0; border: 3.500px solid transparent; border-top: 4px solid #ddd; border-bottom: 0; }
.hscroll { height: 19px; display: flex; align-items: center; background: #5b5b5b; flex: none; }
.hl { margin-left: 6px; width: 0; height: 0; border: 4px solid transparent; border-right: 4px solid #ccc; border-left: 0; }
.hthumb { margin-left: 9px; width: 939px; height: 8px; border-radius: 4px; background: linear-gradient(#d2d2d2, #8f8f8f); }
.hr { margin-left: 271px; width: 0; height: 0; border: 4px solid transparent; border-left: 4px solid #ccc; border-right: 0; }

/* summary */
.summary { height: 82px; display: flex; padding-top: 9px; }
.totals { display: grid; grid-template-columns: 77px 99px; grid-auto-rows: 20px; row-gap: 3px; width: 176px; }
.tl { font-size: 11px; text-align: right; line-height: 21px; padding-right: 1px; color: #e6e6e6; white-space: nowrap; }
.tl2 { padding-right: 4px; }
.tv { background: #fff; color: #111; border: 1px solid #666; text-align: right; padding-right: 3px; line-height: 19px; font-size: 11.300px; word-spacing: -1px; }
.group { width: 129px; height: 67px; margin-left: 85px; border: 1px solid #4a4a4a; border-radius: 3px; }
.grouph { height: 20px; background: #555; padding: 1px 0 0 10px; line-height: 19px; font-size: 11.600px; color: #e4e4e4; }
.groupb { display: flex; align-items: center; padding: 9px 0 0 17px; }
.tvaL { font-size: 11px; letter-spacing: -.3px; color: #e4e4e4; width: 47px; white-space: nowrap; }
.combo { width: 46px; height: 18px; background: #fff; color: #111; display: flex; align-items: center; justify-content: flex-end; gap: 7px; padding-right: 4px; border: 1px solid #666; font-size: 11.500px; }
.comboarr { width: 0; height: 0; border: 4px solid transparent; border-top: 5px solid #bbb; border-bottom: 0; }

.infobar { height: 20px; margin: 7px 1px 0 3px; width: 1584px; background: linear-gradient(#494949, #555); display: flex; align-items: center; padding: 0 1px 0 2px; justify-content: space-between; border-top: 1px solid #4e4e4e; }
.infobtn { width: 20px; height: 15px; background: #5a5a5a; border: 1px solid #474747; border-radius: 2px; display: flex; align-items: center; justify-content: center; color: #f0f0f0; }
.mod { font-size: 11.550px; color: #f0f0f0; }

.bottomtabs { height: 41px; flex: none; display: flex; align-items: center; padding-left: 16px; gap: 33px; background: #5c5c5c; border-top: 1px solid #3f3f3f; color: #dfe6ec; font-size: 14.500px; }
.bt { white-space: nowrap; }
.bm9 { margin-left: 9px; }
.bm7 { margin-left: 7px; }
.bfil { margin-left: -2px; letter-spacing: .2px; }
.bds { margin-left: -2px; }
.status { height: 20px; flex: none; display: flex; align-items: center; background: #505050; padding: 3px 0 0 15px; font-size: 11.700px; color: #e8e8e8; white-space: nowrap; }
.ok { width: 13px; height: 13px; }
.st { flex: none; }
.std { margin-left: 5px; width: 26px; font-size: 11.500px; }
.ssep { width: 1px; height: 20px; margin-top: -3px; background: #454545; flex: none; }
.s1s { margin-left: 9px; }
.fr { margin-left: 4px; width: 43px; font-size: 11.200px; }
.dt { margin-left: 8px; width: 91px; font-size: 11px; }
.s2s { margin-left: 5px; }
.dsm { margin-left: 5px; width: 14px; font: 12px "Liberation Serif", serif; color: #ccc; }
.gen { margin-left: 4px; width: 167px; }
.s3s { margin-left: 5px; }
.s4s { margin-left: auto; margin-right: 8px; }
.vid { color: #7fb0ee; text-decoration: underline; font-size: 10.700px; width: 224px; white-space: nowrap; }
.soc { width: 16px; height: 16px; margin: 0 0 0 8px; display: flex; align-items: center; justify-content: center; color: #fff; font: bold 12px/16px "Liberation Sans", sans-serif; flex: none; align-self: flex-end; }
.in { background: #1a7fb8; font-size: 14px; }
.tw { background: #39a9e4; }
.twb { width: 12px; height: 11px; }
.gp { background: #e4584a; font: bold 13px/16px "Liberation Serif", serif; }
.gp sup { font-size: 8px; line-height: 0; }
.fb { background: #4a72b8; font-size: 14px; margin-right: 4px; }
```
